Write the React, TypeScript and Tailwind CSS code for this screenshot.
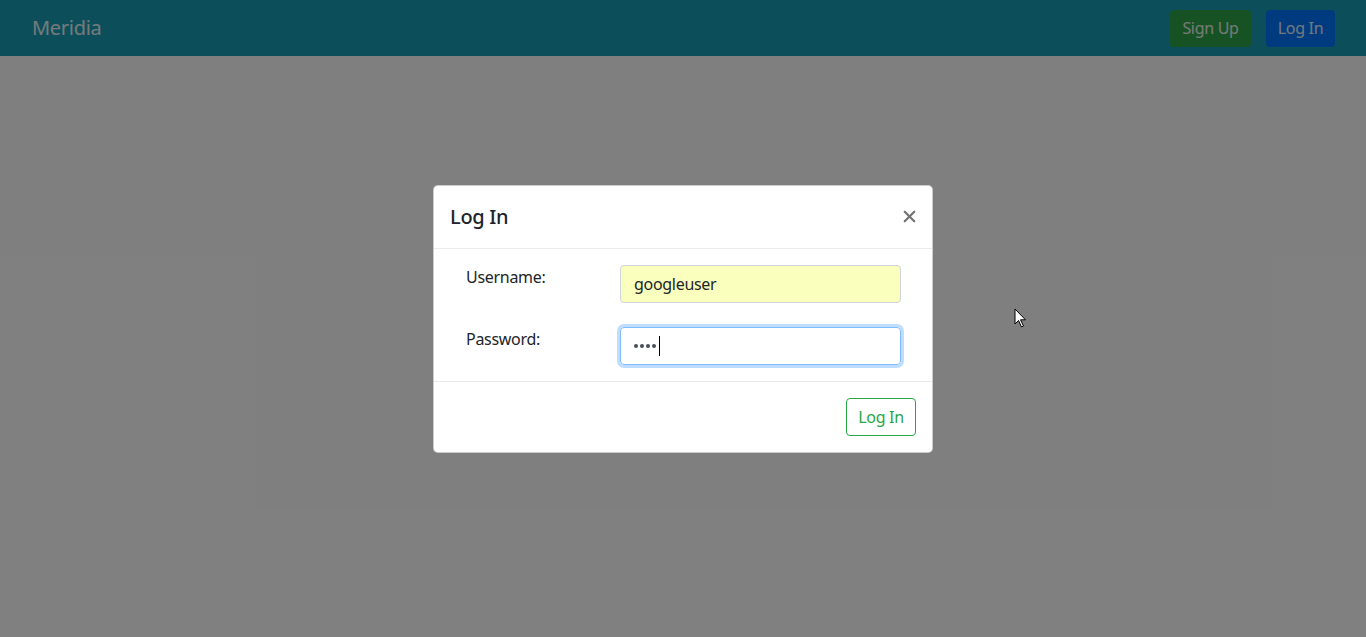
import { X } from "lucide-react";

function Navbar() {
  return (
    <nav className="flex h-14 items-center justify-between bg-[#189eb4] pl-8 pr-[31px]">
      <a className="text-xl tracking-[-0.3px] text-white/90">Meridia</a>
      <div className="flex items-center gap-[15px]">
        <button className="h-[37px] w-[81px] rounded bg-[#2fa449] text-base tracking-[-0.3px] text-white/90">
          Sign Up
        </button>
        <button className="h-[37px] w-[69px] rounded bg-[#0076ff] text-base tracking-[-0.3px] text-white/90">
          Log In
        </button>
      </div>
    </nav>
  );
}

function Cursor() {
  return (
    <svg
      className="absolute left-[1014px] top-[308px]"
      width="14"
      height="21"
      viewBox="0 0 14 21"
    >
      <path
        d="M1 1 L1 16 L4.5 12.5 L7.5 19 L9.5 18 L6.5 11.8 L11.5 11.8 Z"
        fill="#fff"
        stroke="#000"
        strokeWidth="1"
        strokeLinejoin="round"
      />
    </svg>
  );
}

export default function App() {
  return (
    <div
      className="relative h-[637px] overflow-hidden bg-white text-[#212529] tracking-[-0.3px]"
      style={{ fontFamily: '"Noto Sans", "Open Sans", sans-serif' }}
    >
      <Navbar />

      {/* Backdrop + modal */}
      <div className="absolute inset-0 flex items-center justify-center bg-black/50">
        <div className="w-[500px] rounded-[5px] border border-black/20 bg-white">
          <div className="flex items-center justify-between border-b border-[#e9ecef] p-4">
            <h5 className="text-xl leading-[30px] font-medium">Log In</h5>
            <button className="-mr-[3px] text-[#727272]">
              <X size={19} strokeWidth={2.8} />
            </button>
          </div>

          <div className="flex flex-col gap-6 py-4 pl-[32px] pr-[15px]">
            <div className="flex">
              <label className="w-[154px] leading-6">Username:</label>
              <input
                readOnly
                value="googleuser"
                className="h-[38px] w-[281px] rounded border border-[#ced4da] bg-[#faffbd] px-[13px] text-base tracking-[-0.3px] outline-none"
              />
            </div>
            <div className="flex">
              <label className="w-[154px] leading-6">Password:</label>
              <div className="flex h-[38px] w-[281px] items-center gap-[2px] rounded border border-[#80bdff] pl-[13px] shadow-[0_0_0_3px_rgba(0,123,255,0.25)]">
                <span className="h-1 w-1 rounded-full bg-[#495057]" />
                <span className="h-1 w-1 rounded-full bg-[#495057]" />
                <span className="h-1 w-1 rounded-full bg-[#495057]" />
                <span className="h-1 w-1 rounded-full bg-[#495057]" />
                <span className="ml-[1px] h-[20px] w-px bg-black" />
              </div>
            </div>
          </div>

          <div className="flex justify-end border-t border-[#e9ecef] p-4">
            <button className="h-[38px] w-[70px] rounded border border-[#28a745] text-base text-[#28a745]">
              Log In
            </button>
          </div>
        </div>
      </div>

      <Cursor />
    </div>
  );
}
